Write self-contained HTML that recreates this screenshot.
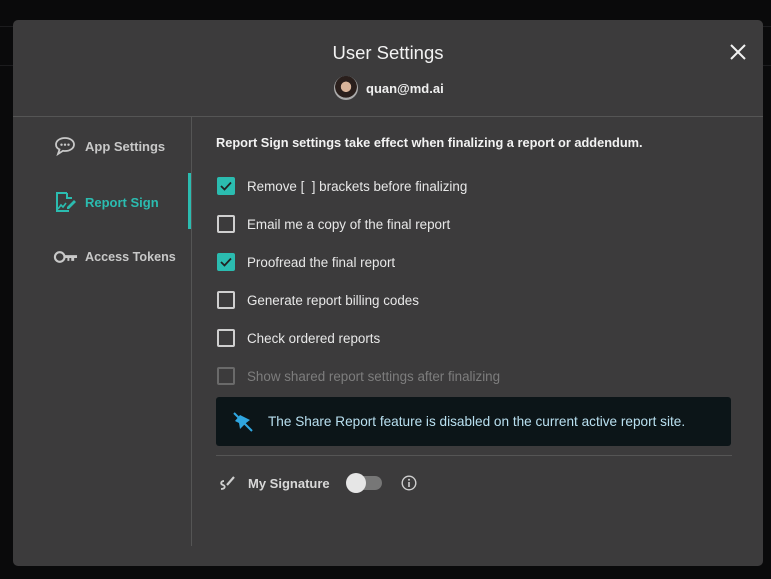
<!DOCTYPE html>
<html><head><style>
*{box-sizing:border-box;margin:0;padding:0}
body{width:771px;height:579px;background:#0a0a0b;font-family:"Liberation Sans",sans-serif;position:relative;overflow:hidden;color:#e6e6e6}
.ln{position:absolute;left:0;width:771px;height:1px;background:#1c1c1e}
.modal{position:absolute;left:13px;top:20px;width:750px;height:546px;background:#3c3b3c;border-radius:5px}
.title{position:absolute;top:22px;width:100%;text-align:center;font-size:18.5px;color:#f2f2f2}
.close{position:absolute;left:717px;top:24px}
.user{position:absolute;top:56px;left:321px;display:flex;align-items:center;gap:8px;font-size:13px;font-weight:bold;color:#f0f0f0}
.av{width:24px;height:24px;border-radius:50%;background:radial-gradient(circle at 50% 45%,#d9b49a 0 28%,#2a1f1c 30% 60%,#aaa 62%)}
.hd{position:absolute;top:96px;left:0;width:750px;height:1px;background:#555}
.vd{position:absolute;left:178px;top:96px;width:1px;height:430px;background:#555}
.act{position:absolute;left:175px;top:153px;width:3px;height:56px;background:#2bbcb0}
.nav{position:absolute;left:40px;display:flex;align-items:center;gap:8px;font-size:13px;font-weight:bold;color:#c8c8c8}
.nav.on{color:#2bbcb0}
.intro{position:absolute;left:203px;top:115px;font-size:12.8px;font-weight:bold;color:#f2f2f2}
.row{position:absolute;left:204px;display:flex;align-items:center;gap:12px;font-size:13.4px;color:#e8e8e8}
.cb{width:18px;height:18px;border:2px solid #cfcfcf;border-radius:2px}
.cb.on{background:#2bbcb0;border-color:#2bbcb0;display:flex;align-items:center;justify-content:center}
.dis{color:#7d7d7d}.dis .cb{border-color:#6a6a6a}
.alert{position:absolute;left:203px;top:377px;width:515px;height:49px;background:#0c1518;border-radius:3px;display:flex;align-items:center;padding-left:16px;gap:14px;font-size:13.6px;color:#b9e0f0}
.hd2{position:absolute;left:203px;top:435px;width:516px;height:1px;background:#555}
.sig{position:absolute;left:204px;top:452px;display:flex;align-items:center;font-size:13px;font-weight:bold;color:#d8d8d8}
</style></head><body>
<div class="ln" style="top:26px"></div><div class="ln" style="top:65px"></div>
<div class="modal">
<div class="title">User Settings</div>
<svg class="close" width="16" height="16" viewBox="0 0 16 16"><path d="M1 1L15 15M15 1L1 15" stroke="#f2f2f2" stroke-width="2"/></svg>
<div class="user"><div class="av"></div>quan@md.ai</div>
<div class="hd"></div><div class="vd"></div><div class="act"></div>
<div class="nav" style="top:115px"><svg width="24" height="22" viewBox="0 0 24 22"><path d="M12 3C6.5 3 3 6 3 9.5c0 2.2 1.4 4 3.5 5L5 19l5-3.2c.7.1 1.3.2 2 .2 5.5 0 9-3 9-6.5S17.5 3 12 3z" fill="none" stroke="#c8c8c8" stroke-width="1.8"/><circle cx="8.5" cy="9.7" r="1.2" fill="#c8c8c8"/><circle cx="12" cy="9.7" r="1.2" fill="#c8c8c8"/><circle cx="15.5" cy="9.7" r="1.2" fill="#c8c8c8"/></svg>App Settings</div>
<div class="nav on" style="top:170px"><svg width="24" height="24" viewBox="0 0 24 24"><path d="M14 3H4v18h12" fill="none" stroke="#2bbcb0" stroke-width="2"/><path d="M14 3v5h5" fill="none" stroke="#2bbcb0" stroke-width="2"/><path d="M5 19l3-4 2 2 3-4" fill="none" stroke="#2bbcb0" stroke-width="1.6"/><path d="M14 17l7-7 2 2-7 7h-2z" fill="#2bbcb0"/></svg>Report Sign</div>
<div class="nav" style="top:227px;gap:7px;font-size:12.6px"><svg width="25" height="20" viewBox="0 0 26 20"><circle cx="7" cy="10" r="5" fill="none" stroke="#c8c8c8" stroke-width="2.2"/><path d="M12 8h13v3h-3v3h-3v-3h-2v3h-2v-3h-3z" fill="#c8c8c8"/></svg>Access Tokens</div>
<div class="intro">Report Sign settings take effect when finalizing a report or addendum.</div>
<div class="row" style="top:157px"><div class="cb on"><svg width="12" height="10" viewBox="0 0 12 10"><path d="M1 5l3.5 3.5L11 1.5" fill="none" stroke="#222" stroke-width="1.8"/></svg></div>Remove [&nbsp; ] brackets before finalizing</div>
<div class="row" style="top:195px"><div class="cb"></div>Email me a copy of the final report</div>
<div class="row" style="top:233px"><div class="cb on"><svg width="12" height="10" viewBox="0 0 12 10"><path d="M1 5l3.5 3.5L11 1.5" fill="none" stroke="#222" stroke-width="1.8"/></svg></div>Proofread the final report</div>
<div class="row" style="top:271px"><div class="cb"></div>Generate report billing codes</div>
<div class="row" style="top:309px"><div class="cb"></div>Check ordered reports</div>
<div class="row dis" style="top:347px"><div class="cb"></div>Show shared report settings after finalizing</div>
<div class="alert"><svg width="22" height="22" viewBox="0 0 22 22"><path d="M2 2l18 18" stroke="#2fa6e0" stroke-width="2"/><path d="M8 4l10 5-4 3-6 6-1-6-4-2z" fill="#2fa6e0"/></svg>The Share Report feature is disabled on the current active report site.</div>
<div class="hd2"></div>
<div class="sig"><svg width="20" height="22" viewBox="0 0 20 22"><path d="M7 9c-3 0-4 3-1 4s2 4-2 4" fill="none" stroke="#cfcfcf" stroke-width="1.8"/><path d="M10 13l7-8" stroke="#cfcfcf" stroke-width="2.2"/></svg><span style="margin-left:11px">My Signature</span>
<div style="margin-left:18px;position:relative;width:34px;height:14px;border-radius:7px;background:#777"><div style="position:absolute;left:-2px;top:-3px;width:20px;height:20px;border-radius:50%;background:#e6e6e6"></div></div>
<svg style="margin-left:19px" width="16" height="16" viewBox="0 0 16 16"><circle cx="8" cy="8" r="6.8" fill="none" stroke="#cfcfcf" stroke-width="1.4"/><path d="M8 7v5" stroke="#cfcfcf" stroke-width="1.6"/><circle cx="8" cy="4.7" r="1" fill="#cfcfcf"/></svg></div>
</div>
</body></html>
